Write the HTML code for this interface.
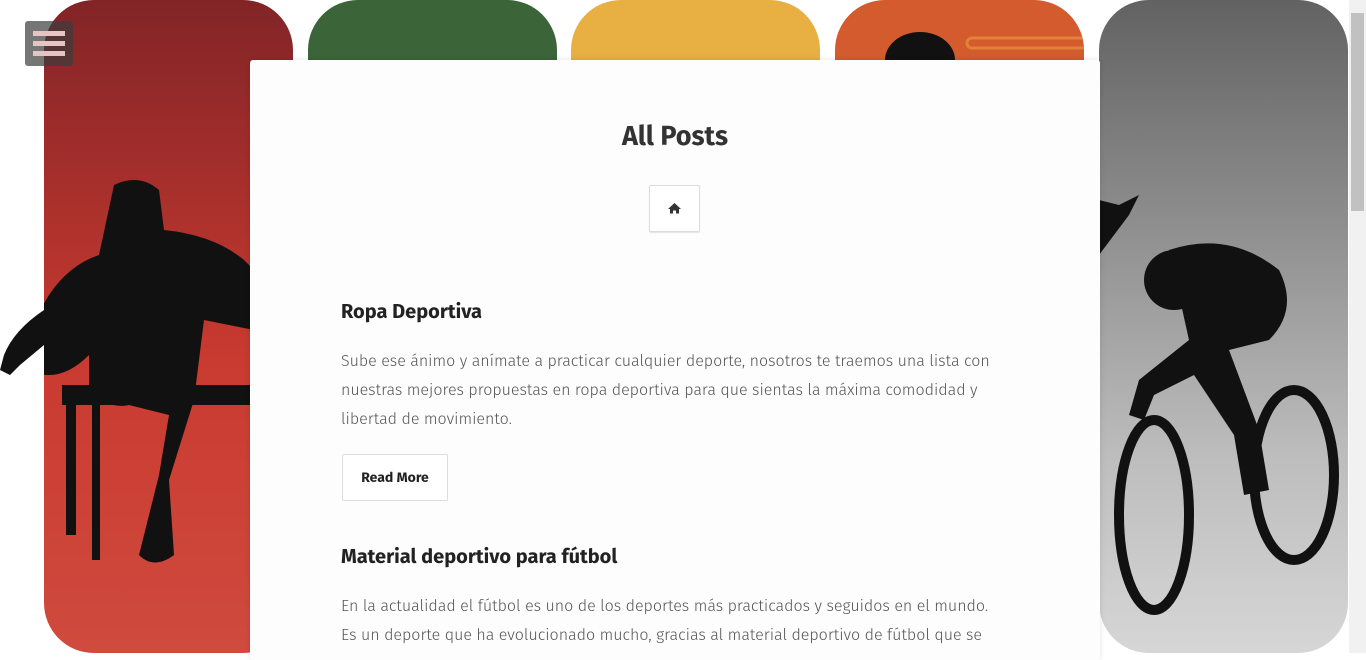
<!DOCTYPE html>
<html><head><meta charset="utf-8"><style>
html,body{margin:0;padding:0;width:1366px;height:653px;overflow:hidden;background:#fff;font-family:"Fira Sans","Liberation Sans",sans-serif;}
.p{position:absolute;top:0;width:249px;height:653px;border-radius:50px;overflow:hidden}
.card{position:absolute;left:250px;top:60px;width:850px;height:600px;background:#fdfdfd;border-radius:3px;box-shadow:0 0 6px rgba(0,0,0,.12)}
h1{position:absolute;left:0;width:850px;top:121px;margin:0;text-align:center;font-size:27px;color:#333;font-weight:bold}
.home{position:absolute;left:649px;top:185px;width:49px;height:45px;border:1px solid #ddd;border-radius:2px;background:#fff;box-shadow:0 1px 1px rgba(0,0,0,.1)}
h2{position:absolute;left:341px;margin:0;font-size:20px;color:#222;font-weight:bold}
p{position:absolute;left:341px;width:665px;margin:0;font-size:16px;line-height:29px;color:#555;font-weight:300}
.btn{position:absolute;left:342px;top:454px;width:104px;height:45px;border:1px solid #ddd;border-radius:2px;background:#fff;font-size:14px;font-weight:bold;color:#222;text-align:center;line-height:45px}
.sb{position:absolute;left:1349px;top:0;width:17px;height:653px;background:#f1f1f1}
</style></head><body>
<div class="p" style="left:44px;background:linear-gradient(#822427,#c93a30 55%,#d04a3e)">
<svg width="249" height="653"><path d="M70 185 q25-12 45 5 l5 40 q50 5 80 30 l40 40 l-30 30 l-50-10 l-10 80 l-25 80 l5 75 q-20 15-35 0 l20-80 l10-60 l-40-10 q-25 5-40-20 l0-30 q-20 20-40 20 l-40 0 q15-40 40-80 q20-30 50-40 z" fill="#111"/><rect x="18" y="385" width="200" height="20" fill="#111"/><rect x="22" y="395" width="10" height="140" fill="#111"/><rect x="48" y="395" width="8" height="165" fill="#111"/></svg></div>
<svg style="position:absolute;left:0;top:300px" width="50" height="80"><path d="M44 10 q-30 20-40 45 l-4 15 l10 5 l10-10 l24-20z" fill="#111"/></svg>
<div class="p" style="left:308px;background:#3c6439"></div>
<div class="p" style="left:571px;background:#e8b043"></div>
<div class="p" style="left:835px;background:#d35b2e"><svg width="249" height="120"><ellipse cx="85" cy="60" rx="35" ry="28" fill="#111"/><rect x="132" y="38" width="150" height="10" rx="5" fill="none" stroke="#e0823a" stroke-width="3"/></svg></div>
<div class="p" style="left:1099px;background:linear-gradient(#626262,#8f8f8f 35%,#bdbdbd 70%,#d6d6d6)">
<svg width="249" height="653"><path d="M0 200 l20 5 l20-10 l-10 20 l-30 40z" fill="#111"/><circle cx="75" cy="280" r="30" fill="#111"/><path d="M70 250 q60-20 110 20 q20 40-10 70 l-40 10 l30 80 l10 60 l-25 5 l-10-60 l-40-60 l-40 20 l-10 25 l-15-5 l10-35 l50-40z" fill="#111"/><ellipse cx="55" cy="515" rx="35" ry="95" fill="none" stroke="#111" stroke-width="10"/><ellipse cx="195" cy="475" rx="40" ry="85" fill="none" stroke="#111" stroke-width="10"/></svg></div>
<div style="position:absolute;left:25px;top:21px;width:48px;height:45px;background:rgba(60,60,60,.7);border-radius:3px"><div style="position:absolute;left:8px;top:10px;width:32px;height:5px;background:#e6c4c4;box-shadow:0 10px 0 #e6c4c4,0 20px 0 #e6c4c4"></div></div>
<div class="card"></div>
<h1 style="left:250px">All Posts</h1>
<div class="home"><svg width="49" height="45" viewBox="0 0 49 45"><path d="M18 23 l6.5-6 6.5 6 h-2 v4.5 h-3 v-3 h-3 v3 h-3 v-4.5z" fill="#333"/></svg></div>
<h2 style="top:300px">Ropa Deportiva</h2>
<p style="top:347px">Sube ese ánimo y anímate a practicar cualquier deporte, nosotros te traemos una lista con nuestras mejores propuestas en ropa deportiva para que sientas la máxima comodidad y libertad de movimiento.</p>
<div class="btn">Read More</div>
<h2 style="top:545px">Material deportivo para fútbol</h2>
<p style="top:592px">En la actualidad el fútbol es uno de los deportes más practicados y seguidos en el mundo. Es un deporte que ha evolucionado mucho, gracias al material deportivo de fútbol que se</p>
<div class="sb"><div style="position:absolute;left:2px;top:13px;width:13px;height:198px;background:#c1c1c1"></div></div>
</body></html>
